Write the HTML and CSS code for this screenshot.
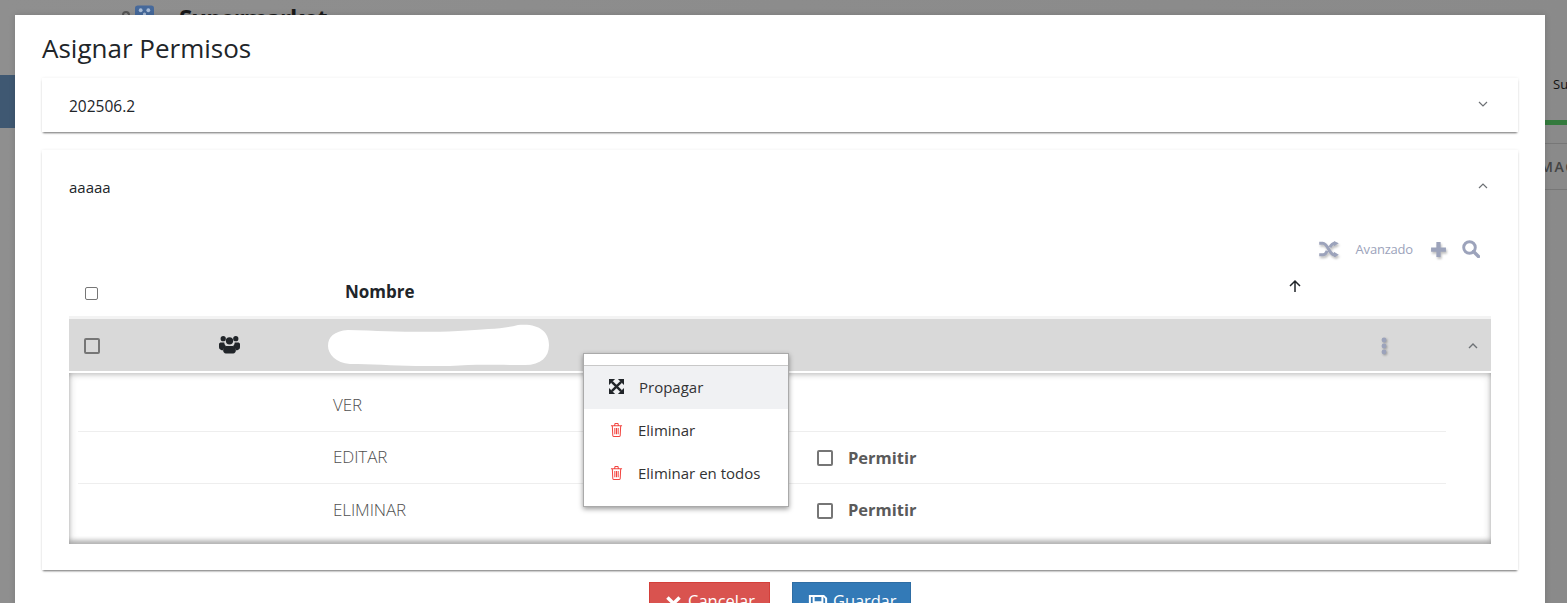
FILE: index.html
```html
<!DOCTYPE html>
<html lang="es">
<head>
<meta charset="utf-8">
<title>Asignar Permisos</title>
<link rel="stylesheet" href="styles.css">
</head>
<body>
<div class="page">
  <div class="page-top">
    <span class="page-mark"></span>
    <svg class="page-logo" viewBox="0 0 20 20"><path d="M0 3q0-3 3-3h14q3 0 3 3v17H0z" fill="#46699b"/><g fill="#a9bcd6"><circle cx="6" cy="5" r="2"/><circle cx="14" cy="5" r="2"/><circle cx="10" cy="9" r="1.700"/><circle cx="14" cy="13" r="2"/></g></svg>
    <span class="page-brand">Supermarket</span>
  </div>
  <div class="page-band"></div>
  <div class="page-right">
    <span class="page-su">Su</span>
    <div class="page-green"></div>
    <div class="page-mac">MAC</div>
  </div>
</div>

<div class="modal">
  <h1 class="modal-title">Asignar Permisos</h1>
  <div class="panel panel-closed">
    <span class="panel-text">202506.2</span>
    <svg class="chev" viewBox="0 0 12 8"><path d="M2 2l4 4 4-4"/></svg>
  </div>
  <div class="panel panel-open">
    <div class="panel-head">
      <span>aaaaa</span>
      <svg class="chev" viewBox="0 0 12 8"><path d="M2 6l4-4 4 4"/></svg>
    </div>
    <div class="toolbar">
      <svg class="tool tool-shuffle" viewBox="0 0 22 18"><path d="M0 2.500h4c6 0 7 13 13 13h1M0 15.500h4c2.500 0 4-2.300 5-4.500M12 7c1-2 2.500-4.500 6-4.500" fill="none" stroke="currentColor" stroke-width="3.400"/><path d="M16.500 0L22 2.500 16.500 6zM16.500 12l5.500 3.500-5.500 3.500z" fill="currentColor"/></svg>
      <span class="tool-label">Avanzado</span>
      <svg class="tool tool-plus" viewBox="0 0 16 16"><path d="M6 1h4v5h5v4h-5v5H6v-5H1V6h5z" fill="currentColor"/></svg>
      <svg class="tool-search" viewBox="0 0 18 18"><circle cx="7.500" cy="7.500" r="5.800" fill="none" stroke="currentColor" stroke-width="2.900"/><path d="M11.500 11.500l5 5" stroke="currentColor" stroke-width="3.400" stroke-linecap="round"/></svg>
    </div>
    <div class="table-head">
      <div class="col-check"><span class="box box-small"></span></div>
      <div class="col-icon"></div>
      <div class="col-name head-name">Nombre</div>
      <svg class="sort" viewBox="0 0 14 14"><path d="M7 13V2M2 7l5-5 5 5" fill="none" stroke="#212529" stroke-width="1.500"/></svg>
    </div>
    <div class="row">
      <div class="col-check"><span class="box"></span></div>
      <div class="col-icon">
        <svg class="users" viewBox="0 0 20 18"><g fill="#212529"><circle cx="4" cy="3.500" r="2.500"/><circle cx="16" cy="3.500" r="2.500"/><circle cx="10" cy="5.500" r="3.500"/><path d="M0 8.500c0-1 1-1.500 2-1.500h3c.3 2 1 3 2 3.500-1.700 1-2.700 2.300-3 4-2 0-4-1-4-3zM20 8.500c0-1-1-1.500-2-1.500h-3c-.3 2-1 3-2 3.500 1.700 1 2.700 2.300 3 4 2 0 4-1 4-3z"/><path d="M7 10.500h6c2 0 3 1.500 3 4 0 2-1 3-2.500 3h-7C5 17.500 4 16.500 4 14.500c0-2.500 1-4 3-4z"/></g></svg>
      </div>
      <svg class="blob" viewBox="0 0 221 42"><path d="M20 6C60 7 90 9 130 7c30-2 45-2 60-6 20-2 31 6 31 20 0 12-8 20-24 20-30 0-50-1-75 1-40 1-70-2-100-2C8 39 0 30 0 22 0 13 6 7 20 6z" fill="#fff"/></svg>
      <div class="row-end">
        <svg class="dots" viewBox="0 0 6 18"><g fill="currentColor"><circle cx="3" cy="3" r="2.400"/><circle cx="3" cy="9" r="2.400"/><circle cx="3" cy="15" r="2.400"/></g></svg>
        <svg class="chev chev-row" viewBox="0 0 12 8"><path d="M2 6l4-4 4 4"/></svg>
      </div>
    </div>
    <div class="detail">
      <div class="perm">
        <span class="perm-name">VER</span>
      </div>
      <div class="perm">
        <span class="perm-name">EDITAR</span>
        <span class="box"></span><b class="perm-allow">Permitir</b>
      </div>
      <div class="perm">
        <span class="perm-name">ELIMINAR</span>
        <span class="box"></span><b class="perm-allow">Permitir</b>
      </div>
    </div>
    <div class="menu">
      <div class="menu-item menu-item-active">
        <svg class="menu-icon icon-expand" viewBox="0 0 16 16"><g fill="#212529"><path d="M0 0h6.500L0 6.500zM16 0v6.500L9.500 0zM0 16v-6.500L6.500 16zM16 16H9.500L16 9.500z"/></g><path d="M3 3l10 10M13 3L3 13" stroke="#212529" stroke-width="2.600"/></svg>
        <span>Propagar</span>
      </div>
      <div class="menu-item">
        <svg class="menu-icon" viewBox="0 0 14 16"><g fill="none" stroke="#f2443f" stroke-width="1.100"><path d="M1 4h12M2.500 4l.5 10.500c0 .5.500 1 1 1h6c.5 0 1-.5 1-1L11.500 4M4.800 4l.7-2.500h3L9.200 4M5.200 6.500v6.500M7 6.500v6.500M8.800 6.500v6.500"/></g></svg>
        <span>Eliminar</span>
      </div>
      <div class="menu-item">
        <svg class="menu-icon" viewBox="0 0 14 16"><g fill="none" stroke="#f2443f" stroke-width="1.100"><path d="M1 4h12M2.500 4l.5 10.500c0 .5.500 1 1 1h6c.5 0 1-.5 1-1L11.500 4M4.800 4l.7-2.500h3L9.200 4M5.200 6.500v6.500M7 6.500v6.500M8.800 6.500v6.500"/></g></svg>
        <span>Eliminar en todos</span>
      </div>
    </div>
  </div>
  <div class="actions">
    <button class="btn btn-cancel"><svg class="btn-icon" viewBox="0 0 14 14"><path d="M3 1l4 4 4-4 2 2-4 4 4 4-2 2-4-4-4 4-2-2 4-4-4-4z" fill="#fff"/></svg>Cancelar</button>
    <button class="btn btn-save"><svg class="btn-icon btn-icon-save" viewBox="0 0 16 16"><path d="M1.500 1.500h11l2 2v11h-13zM4.500 1.500v5h7v-5M4 14.500v-5h8v5" fill="none" stroke="#fff" stroke-width="1.600"/></svg>Guardar</button>
  </div>
</div>
</body>
</html>
```
FILE: styles.css
```css
* { box-sizing: border-box; }
html, body { margin: 0; height: 603px; overflow: hidden; }
body {
  position: relative;
  font-family: "Open Sans", "Noto Sans", sans-serif;
  color: #212529;
  background: #8e8e8e;
}
.page { height: 603px; position: relative; background: linear-gradient(90deg, #8f8f8f, #8c8c8c 50%, #8a8a8a); }
.page-top { display: flex; align-items: flex-start; padding: 5px 0 0 122px; height: 75px; }
.page-mark { width: 8px; height: 6px; margin-top: 6px; margin-right: 5px; border: 2px solid #555; border-bottom: 0; border-radius: 4px 4px 0 0; }
.page-logo { width: 19px; height: 20px; }
.page-brand { font-size: 24px; font-weight: 700; color: #1a1a1a; line-height: 24px; margin-left: 25px; margin-top: 1px; letter-spacing: -.9px; }
.page-band { width: 15px; height: 53px; background: #3f5872; }
.page-right { position: absolute; left: 1545px; top: 0; width: 22px; height: 603px; }
.page-su { position: absolute; left: 8px; top: 75px; font-size: 13px; color: #111; }
.page-green { position: absolute; left: 0; top: 120px; width: 22px; height: 5px; background: #347a3d; }
.page-mac { position: absolute; left: 0; top: 143px; width: 22px; height: 47px; border-top: 1px solid #777; border-bottom: 1px solid #777; overflow: hidden; font-size: 14px; font-weight: 600; letter-spacing: 1.500px; line-height: 46px; white-space: nowrap; color: #444; text-indent: -5px; }

.modal {
  position: absolute;
  left: 15px;
  top: 15px;
  width: 1530px;
  height: 640px;
  background: #fff;
  padding: 0 27px;
  box-shadow: 0 0 6px rgba(0,0,0,.15);
}
.modal-title { margin: 0; font-size: 26px; font-weight: 500; line-height: 34px; padding-top: 16px; height: 63px; color: #212529; }

.panel { background: #fff; box-shadow: 0 2px 2px -1px rgba(0,0,0,.55), 0 0 3px rgba(0,0,0,.07); font-size: 15px; font-weight: 400; }
.panel-closed { height: 54px; display: flex; align-items: center; justify-content: space-between; padding: 0 27px; margin-bottom: 18px; font-size: 15.500px; }
.panel-text { padding-top: 2px; }
.panel-open { height: 420px; padding: 0 27px; position: relative; }
.panel-head { height: 74px; display: flex; align-items: center; justify-content: space-between; }
.chev { width: 12px; height: 8px; fill: none; stroke: #6d7175; stroke-width: 1.200; margin-right: 2px; margin-top: -3px; }

.toolbar { display: flex; justify-content: flex-end; align-items: center; height: 50px; padding: 0 11px 0 0; color: #9ca3bb; }
.tool { filter: drop-shadow(1px 2px 1px rgba(0,0,0,.25)); }
.tool-shuffle { width: 20px; height: 16px; }
.tool-label { font-size: 13px; margin: 0 17px 0 17px; letter-spacing: -.2px; }
.tool-plus { width: 17px; height: 17px; margin-right: 15px; }
.tool-search { width: 18px; height: 18px; }

.table-head { display: flex; align-items: center; height: 41px; position: relative; }
.col-check { width: 136px; padding-left: 15px; display: flex; align-items: center; }
.col-icon { width: 122px; padding-left: 14px; display: flex; align-items: center; }
.col-name { flex: 1; }
.head-name { font-size: 17px; font-weight: 700; padding-left: 18px; margin-top: -6px; color: #212529; }
.sort { position: absolute; left: 1219px; top: 5px; width: 14px; height: 14px; }

.box { display: inline-block; width: 16px; height: 16px; border: 2px solid #767676; border-radius: 2px; flex: none; }
.box-small { width: 13px; height: 13px; margin-left: 1px; margin-top: -3px; border-width: 1.500px; }

.row { display: flex; align-items: center; height: 52px; margin-top: 4px; background: #d9d9d9; position: relative; box-shadow: 0 -3px 0 #f3f3f3; padding-top: 1px; }
.users { width: 21px; height: 19px; margin-top: -3px; }
.blob { width: 221px; height: 42px; margin-left: 1px; margin-top: -2px; }
.row-end { margin-left: auto; display: flex; align-items: center; }
.dots { width: 6px; height: 18px; color: #9ca3bb; margin-right: 80px; filter: drop-shadow(1px 1px 1px rgba(0,0,0,.3)); }
.chev-row { margin-right: 12px; stroke-width: 1.400; margin-top: 1px; }

.detail { margin-top: 2px; height: 171px; padding: 7px 45px 0 9px; box-shadow: inset 0 0 8px rgba(0,0,0,.2), inset 0 -4px 4px rgba(0,0,0,.22), inset 0 4px 4px -2px rgba(0,0,0,.12); }
.perm { display: flex; align-items: center; height: 52px; border-bottom: 1px solid #eee; font-weight: 300; color: #505050; }
.perm:last-child { border-bottom: 0; }
.perm-name { width: 484px; padding-left: 255px; padding-bottom: 2px; font-size: 17px; letter-spacing: -.1px; }
.perm .box { margin-left: 255px; margin-top: 1px; }
.perm-allow { margin-left: 15px; padding-bottom: 1px; font-size: 16.500px; font-weight: 700; color: #5a5a5a; }

.menu { position: absolute; left: 541px; top: 203px; width: 206px; height: 154px; background: #fff; border: 1px solid #aaa; box-shadow: 0 2px 5px rgba(0,0,0,.4); padding-top: 11px; }
.menu::before { content: ""; display: block; border-top: 1px solid #c8c8c8; }
.menu-item { display: flex; align-items: center; height: 43px; padding: 0 0 2px 26px; font-size: 15px; font-weight: 400; color: #333; }
.menu-item-active { background: #f0f1f3; }
.menu-icon { width: 13px; height: 15px; margin-right: 15px; flex: none; }
.icon-expand { width: 15px; height: 15px; margin-right: 15px; margin-left: -1px; }

.actions { display: flex; justify-content: center; gap: 22px; margin-top: 12px; }
.btn { height: 36px; border: 1px solid; border-radius: 0; font-family: inherit; font-size: 16.500px; color: #fff; padding: 0 0 0 15px; display: flex; align-items: center; gap: 6px; }
.btn-icon { width: 17px; height: 17px; flex: none; margin-top: 6px; }
.btn-icon-save { width: 20px; height: 20px; margin-right: -1px; margin-top: 7px; }
.btn-cancel { width: 121px; background: #d9534f; border-color: #d43f3a; }
.btn-save { width: 119px; background: #337ab7; border-color: #2e6da4; letter-spacing: -.1px; }
```
